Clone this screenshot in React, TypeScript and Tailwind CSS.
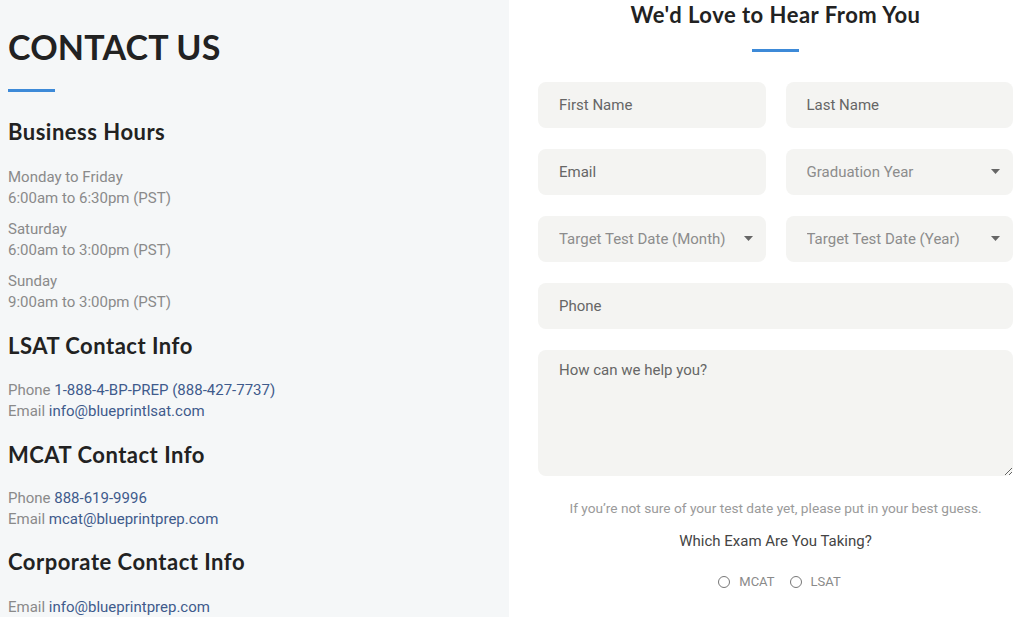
import React from "react";

const heading = "font-['Lato','Open_Sans',sans-serif] font-bold text-[#222]";
const body = "font-['Roboto','Liberation_Sans',sans-serif]";

const hours = [
  { day: "Monday to Friday", time: "6:00am to 6:30pm (PST)" },
  { day: "Saturday", time: "6:00am to 3:00pm (PST)" },
  { day: "Sunday", time: "9:00am to 3:00pm (PST)" },
];

function Field({ placeholder }: { placeholder: string }) {
  return (
    <input
      type="text"
      placeholder={placeholder}
      className={`${body} h-[46px] w-full rounded-[8px] bg-[#f4f4f2] px-[21px] text-[15px] text-[#555] outline-none placeholder:text-[#666]`}
    />
  );
}

function Dropdown({ label }: { label: string }) {
  return (
    <div className="relative">
      <select
        defaultValue=""
        className={`${body} h-[46px] w-full appearance-none rounded-[8px] bg-[#f4f4f2] px-[21px] text-[15px] text-[#8c8c8c] outline-none`}
      >
        <option value="" disabled>
          {label}
        </option>
      </select>
      <svg
        className="pointer-events-none absolute right-[13px] top-[20px]"
        width="9"
        height="5"
        viewBox="0 0 9 5"
      >
        <path d="M0 0h9L4.5 5z" fill="#666" />
      </svg>
    </div>
  );
}

function Radio({ label }: { label: string }) {
  return (
    <label className="flex items-center gap-[9px]">
      <span className="h-[12px] w-[12px] rounded-full border border-[#777] bg-white" />
      <span className={`${body} text-[13px] text-[#8a8a8a]`}>{label}</span>
    </label>
  );
}

export default function App() {
  return (
    <div className="flex h-[617px] w-[1024px] overflow-hidden">
      {/* left column */}
      <div className="w-[509px] shrink-0 bg-[#f5f7f8] pl-2 pt-[27px]">
        <h1 className={`${heading} text-[34px] leading-[40px] tracking-[0.2px]`}>CONTACT US</h1>
        <div className="mt-[22px] h-[3px] w-[47px] bg-[#3d8ad8]" />

        <h2 className={`${heading} mt-[26px] text-[22px] leading-[28px] tracking-[0.5px]`}>Business Hours</h2>
        <div className={`${body} mt-[21px] flex flex-col gap-[10px] text-[15px] leading-[21px] text-[#8a8a8a]`}>
          {hours.map((h) => (
            <div key={h.day}>
              <div>{h.day}</div>
              <div>{h.time}</div>
            </div>
          ))}
        </div>

        <h2 className={`${heading} mt-[19px] text-[22px] leading-[28px] tracking-[0.5px]`}>LSAT Contact Info</h2>
        <div className={`${body} mt-[20px] text-[15px] leading-[21px] text-[#8a8a8a]`}>
          <div>
            Phone <span className="text-[#3f5b8c]">1-888-4-BP-PREP (888-427-7737)</span>
          </div>
          <div>
            Email <span className="text-[#3f5b8c]">info@blueprintlsat.com</span>
          </div>
        </div>

        <h2 className={`${heading} mt-[19px] text-[22px] leading-[28px] tracking-[0.5px]`}>MCAT Contact Info</h2>
        <div className={`${body} mt-[19px] text-[15px] leading-[21px] text-[#8a8a8a]`}>
          <div>
            Phone <span className="text-[#3f5b8c]">888-619-9996</span>
          </div>
          <div>
            Email <span className="text-[#3f5b8c]">mcat@blueprintprep.com</span>
          </div>
        </div>

        <h2 className={`${heading} mt-[18px] text-[22px] leading-[28px] tracking-[0.5px]`}>Corporate Contact Info</h2>
        <div className={`${body} mt-[21px] text-[15px] leading-[21px] text-[#8a8a8a]`}>
          <div>
            Email <span className="text-[#3f5b8c]">info@blueprintprep.com</span>
          </div>
        </div>
      </div>

      {/* right column: form */}
      <div className="flex-1 bg-white pl-[29px] pr-[11px] pt-[1px]">
        <h2 className={`${heading} text-center text-[22px] leading-[28px] tracking-[0.5px]`}>We'd Love to Hear From You</h2>
        <div className="mx-auto mt-[20px] h-[3px] w-[47px] bg-[#3d8ad8]" />

        <div className="mt-[30px] grid grid-cols-2 gap-x-[20px] gap-y-[21px]">
          <Field placeholder="First Name" />
          <Field placeholder="Last Name" />
          <Field placeholder="Email" />
          <Dropdown label="Graduation Year" />
          <Dropdown label="Target Test Date (Month)" />
          <Dropdown label="Target Test Date (Year)" />
          <div className="col-span-2">
            <Field placeholder="Phone" />
          </div>
          <textarea
            placeholder="How can we help you?"
            className={`${body} col-span-2 block h-[126px] w-full rounded-[8px] bg-[#f4f4f2] px-[21px] pt-[9px] text-[15px] text-[#555] outline-none placeholder:text-[#666]`}
          />
        </div>

        <p className={`${body} mt-[23px] text-center text-[13.7px] leading-[18px] text-[#9a9a9a]`}>
          If you’re not sure of your test date yet, please put in your best guess.
        </p>
        <p className={`${body} mt-[14px] text-center text-[15px] leading-[21px] text-[#444]`}>
          Which Exam Are You Taking?
        </p>
        <div className="mt-[20px] flex justify-center gap-[15px] pl-[8px]">
          <Radio label="MCAT" />
          <Radio label="LSAT" />
        </div>
      </div>
    </div>
  );
}
